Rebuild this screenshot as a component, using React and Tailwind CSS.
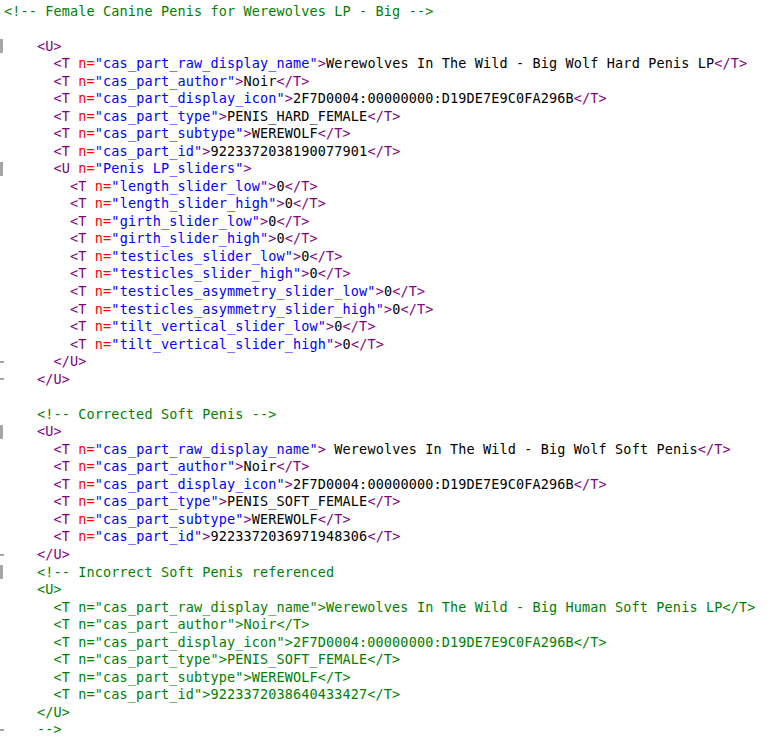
import React from 'react';

// XML editor view: one row per line, tokens coloured like the IDE
const C = {
    tag: 'text-[#800080]',
    attr: 'text-[#ff0000]',
    str: 'text-[#0000ff]',
    text: 'text-black',
    comment: 'text-[#008000]',
};

const T = (name, value, indent = 6) => ({ kind: 't', name, value, indent });
const raw = (text, indent, cls = C.tag) => ({ kind: 'raw', text, indent, cls });
const green = (text, indent) => ({ kind: 'raw', text, indent, cls: C.comment });
const blank = { kind: 'raw', text: '', indent: 0 };

const ICON = '2F7D0004:00000000:D19DE7E9C0FA296B';

const lines = [
    green('<!-- Female Canine Penis for Werewolves LP - Big -->', 0),
    blank,
    { ...raw('<U>', 4), mark: 'bar' },
    T('cas_part_raw_display_name', 'Werewolves In The Wild - Big Wolf Hard Penis LP'),
    T('cas_part_author', 'Noir'),
    T('cas_part_display_icon', ICON),
    T('cas_part_type', 'PENIS_HARD_FEMALE'),
    T('cas_part_subtype', 'WEREWOLF'),
    T('cas_part_id', '9223372038190077901'),
    { kind: 'u', name: 'Penis LP_sliders', indent: 6, mark: 'bar' },
    T('length_slider_low', '0', 8),
    T('length_slider_high', '0', 8),
    T('girth_slider_low', '0', 8),
    T('girth_slider_high', '0', 8),
    T('testicles_slider_low', '0', 8),
    T('testicles_slider_high', '0', 8),
    T('testicles_asymmetry_slider_low', '0', 8),
    T('testicles_asymmetry_slider_high', '0', 8),
    T('tilt_vertical_slider_low', '0', 8),
    T('tilt_vertical_slider_high', '0', 8),
    { ...raw('</U>', 6), mark: 'dash' },
    { ...raw('</U>', 4), mark: 'dash' },
    blank,
    green('<!-- Corrected Soft Penis -->', 4),
    { ...raw('<U>', 4), mark: 'bar' },
    T('cas_part_raw_display_name', ' Werewolves In The Wild - Big Wolf Soft Penis'),
    T('cas_part_author', 'Noir'),
    T('cas_part_display_icon', ICON),
    T('cas_part_type', 'PENIS_SOFT_FEMALE'),
    T('cas_part_subtype', 'WEREWOLF'),
    T('cas_part_id', '9223372036971948306'),
    { ...raw('</U>', 4), mark: 'dash' },
    { ...green('<!-- Incorrect Soft Penis referenced', 4), mark: 'bar' },
    green('<U>', 4),
    green('<T n="cas_part_raw_display_name">Werewolves In The Wild - Big Human Soft Penis LP</T>', 6),
    green('<T n="cas_part_author">Noir</T>', 6),
    green(`<T n="cas_part_display_icon">${ICON}</T>`, 6),
    green('<T n="cas_part_type">PENIS_SOFT_FEMALE</T>', 6),
    green('<T n="cas_part_subtype">WEREWOLF</T>', 6),
    green('<T n="cas_part_id">9223372038640433427</T>', 6),
    green('</U>', 4),
    { ...green('-->', 4), mark: 'dash' },
];

const Gutter = ({ mark }) => (
    <div className="w-[4px] shrink-0 flex items-center">
        {mark === 'bar' && <div className="w-[3px] h-[14px] bg-[#a6a6a6]"></div>}
        {mark === 'dash' && <div className="w-[5px] h-[2px] bg-[#a6a6a6]"></div>}
    </div>
);

const Line = ({ line }) => {
    const pad = ' '.repeat(line.indent || 0);
    let body = null;

    if (line.kind === 't') {
        body = (
            <>
                <span className={C.tag}>{'<T '}</span>
                <span className={C.attr}>n=</span>
                <span className={C.str}>"{line.name}"</span>
                <span className={C.tag}>{'>'}</span>
                <span className={C.text}>{line.value}</span>
                <span className={C.tag}>{'</T>'}</span>
            </>
        );
    } else if (line.kind === 'u') {
        body = (
            <>
                <span className={C.tag}>{'<U '}</span>
                <span className={C.attr}>n=</span>
                <span className={C.str}>"{line.name}"</span>
                <span className={C.tag}>{'>'}</span>
            </>
        );
    } else {
        body = <span className={line.cls}>{line.text}</span>;
    }

    return (
        <div className="flex h-[17.54px]">
            <Gutter mark={line.mark} />
            <div className="whitespace-pre">
                {pad}
                {body}
            </div>
        </div>
    );
};

export default function App() {
    return (
        <div
            className="w-[773px] h-[742px] bg-white overflow-hidden pt-[2.5px] text-[13.5px] leading-[17.54px] tracking-[0.13px]"
            style={{ fontFamily: '"DejaVu Sans Mono", "Liberation Mono", monospace' }}
        >
            {lines.map((line, i) => (
                <Line key={i} line={line} />
            ))}
        </div>
    );
}
